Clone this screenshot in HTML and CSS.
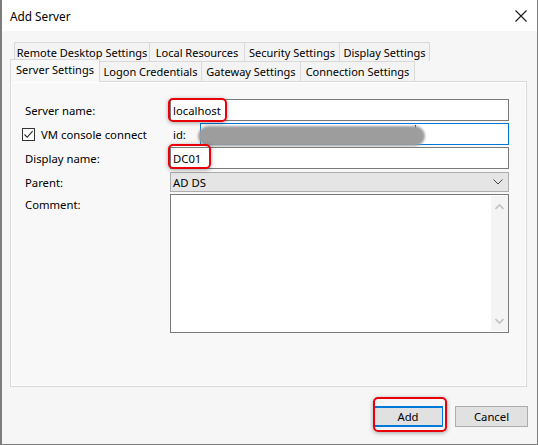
FILE: index.html
```html
<!DOCTYPE html>
<html>
<head>
<meta charset="utf-8">
<title>Add Server</title>
<link rel="stylesheet" href="styles.css">
</head>
<body>
<div class="window">
  <div class="titlebar">
    <span class="title">Add Server</span>
    <svg class="close" width="12" height="12" viewBox="0 0 12 12"><path d="M0.5 0.5 L11.5 11.5 M11.5 0.5 L0.5 11.5" stroke="#1a1a1a" stroke-width="1.1" fill="none"/></svg>
  </div>
  <div class="content">
    <div class="tabs">
      <div class="tabrow back">
        <div class="tab">Remote Desktop Settings</div>
        <div class="tab">Local Resources</div>
        <div class="tab">Security Settings</div>
        <div class="tab">Display Settings</div>
      </div>
      <div class="tabrow front">
        <div class="tab selected">Server Settings</div>
        <div class="tab">Logon Credentials</div>
        <div class="tab">Gateway Settings</div>
        <div class="tab">Connection Settings</div>
      </div>
    </div>
    <div class="panel">
      <div class="form">
        <div class="label">Server name:</div>
        <div class="input">localhost</div>

        <div class="label check-label">
          <span class="checkbox"><svg width="11" height="11" viewBox="0 0 11 11"><path d="M1.5 5.5 L4.2 8.3 L9.6 2.2" stroke="#222" stroke-width="1.1" fill="none"/></svg></span>
          <span>VM console connect</span>
        </div>
        <div class="idrow">
          <span class="idlabel">id:</span>
          <div class="input focused"><span class="caret"></span></div>
        </div>

        <div class="label">Display name:</div>
        <div class="input">DC01</div>

        <div class="label parent-label">Parent:</div>
        <div class="select">
          <span>AD DS</span>
          <svg width="10" height="6" viewBox="0 0 10 6"><path d="M0.5 0.5 L5 5 L9.5 0.5" stroke="#444" stroke-width="1" fill="none"/></svg>
        </div>

        <div class="label comment-label">Comment:</div>
        <div class="textarea">
          <div class="vscroll">
            <svg width="9" height="6" viewBox="0 0 9 6"><path d="M0.5 5 L4.5 1 L8.5 5" stroke="#c2c2c2" stroke-width="1.6" fill="none"/></svg>
            <svg width="9" height="6" viewBox="0 0 9 6"><path d="M0.5 1 L4.5 5 L8.5 1" stroke="#c2c2c2" stroke-width="1.6" fill="none"/></svg>
          </div>
        </div>
      </div>
    </div>
    <div class="footer">
      <button class="btn default">Add</button>
      <button class="btn">Cancel</button>
    </div>
  </div>

  <div class="redact"></div>
  <div class="mark mark-host"></div>
  <div class="mark mark-dc"></div>
  <div class="mark mark-add"></div>
</div>
</body>
</html>
```

FILE: styles.css
```css
* { box-sizing: border-box; }
html, body { margin: 0; padding: 0; }
body {
  font-family: "Noto Sans", "Open Sans", sans-serif;
  font-size: 11.3px;
  color: #000;
  background: #fff;
}
.window {
  position: relative;
  width: 538px;
  height: 445px;
  background: #f6f6f6;
  border-left: 2px solid #7d7d7d;
  border-right: 1px solid #7d7d7d;
  border-bottom: 1px solid #7d7d7d;
  overflow: hidden;
}
.titlebar {
  height: 31px;
  background: #fff;
  display: flex;
  align-items: center;
  justify-content: space-between;
  padding: 0 10px 0 8px;
}
.title { font-size: 11.8px; }

.content {
  padding: 11px 9px 0 8px;
}
.tabs { display: flex; flex-direction: column; font-size: 11px; }
.tabrow { display: flex; }
.tab {
  border: 1px solid #d9d9d9;
  background: #f3f3f3;
  display: flex;
  align-items: center;
  justify-content: center;
  white-space: nowrap;
  margin-left: -1px;
}
.tab:first-child { margin-left: 0; }
.back { margin-left: 4px; height: 19px; }
.back .tab { border-bottom: none; height: 19px; }
.back .tab:nth-child(1) { width: 136px; }
.back .tab:nth-child(2) { width: 96px; }
.back .tab:nth-child(3) { width: 96px; }
.back .tab:nth-child(4) { width: 91px; }

.front { height: 22px; margin-top: -2px; align-items: flex-end; }
.front .tab { height: 20px; border-bottom: none; }
.front .tab:nth-child(1) { width: 90px; }
.front .tab:nth-child(2) { width: 103px; }
.front .tab:nth-child(3) { width: 100px; }
.front .tab:nth-child(4) { width: 115px; }
.front .tab.selected {
  height: 23px;
  margin-bottom: -1px;
  background: #f8f8f8;
  position: relative;
  z-index: 1;
  padding-bottom: 3px;
}

.panel {
  width: 517px;
  height: 306px;
  border: 1px solid #d9d9d9;
  box-shadow: inset 0 0 0 1px #fff;
  background: #f8f8f8;
  padding: 17px 0 0 14px;
}
.form {
  display: grid;
  grid-template-columns: 145px 339px;
  grid-template-rows: 22px 22px 22px 21px 139px;
  row-gap: 2px;
}
.label {
  display: flex;
  align-items: center;
  white-space: nowrap;
}
.check-label { margin-left: -3px; gap: 6px; }
.checkbox {
  width: 13px;
  height: 13px;
  border: 1px solid #333;
  background: #fff;
  display: flex;
  align-items: center;
  justify-content: center;
}
.parent-label { margin-top: 1px; }
.comment-label { align-items: flex-start; padding-top: 3px; }

.input {
  border: 1px solid #7a7a7a;
  background: #fff;
  display: flex;
  align-items: center;
  padding-left: 2px;
  white-space: nowrap;
}
.idrow { display: flex; }
.idlabel { width: 30px; display: flex; align-items: center; padding-left: 3px; }
.input.focused {
  flex: 1;
  border-color: #0078d7;
  position: relative;
}
.caret {
  position: absolute;
  left: 214px;
  top: 1px;
  width: 1px;
  height: 5px;
  background: #222;
}
.select {
  margin-top: 1px;
  border: 1px solid #adadad;
  background: #e5e5e5;
  display: flex;
  align-items: center;
  justify-content: space-between;
  padding: 0 5px 0 2px;
}
.textarea {
  border: 1px solid #7a7a7a;
  background: #fff;
  display: flex;
  justify-content: flex-end;
  padding: 1px 0;
}
.vscroll {
  width: 17px;
  background: #f4f4f4;
  display: flex;
  flex-direction: column;
  justify-content: space-between;
  align-items: center;
  padding: 8px 0 7px;
}

.footer {
  display: flex;
  justify-content: flex-end;
  gap: 12px;
  margin-top: 19px;
}
.btn {
  font-family: inherit;
  font-size: 11.3px;
  height: 21px;
  background: #e1e1e1;
  border: 1px solid #adadad;
  color: #000;
  padding: 0;
  margin: 0;
}
.btn.default { width: 70px; border: 1px solid #0078d7; border-top-width: 2px; border-bottom-width: 2px; }
.btn:last-child { width: 73px; }

.redact {
  position: absolute;
  left: 196px;
  top: 126px;
  width: 227px;
  height: 20px;
  border-radius: 10px;
  background: #9d9d9d;
  filter: blur(0.8px);
}
.mark {
  position: absolute;
  border: 2px solid #e8000b;
  border-radius: 5px;
  box-shadow: 0 1px 4px rgba(0,0,0,0.35);
}
.mark-host { left: 166px; top: 98px; width: 59px; height: 24px; }
.mark-dc { left: 166px; top: 144px; width: 43px; height: 25px; }
.mark-add { left: 371px; top: 397px; width: 74px; height: 35px; }
```
